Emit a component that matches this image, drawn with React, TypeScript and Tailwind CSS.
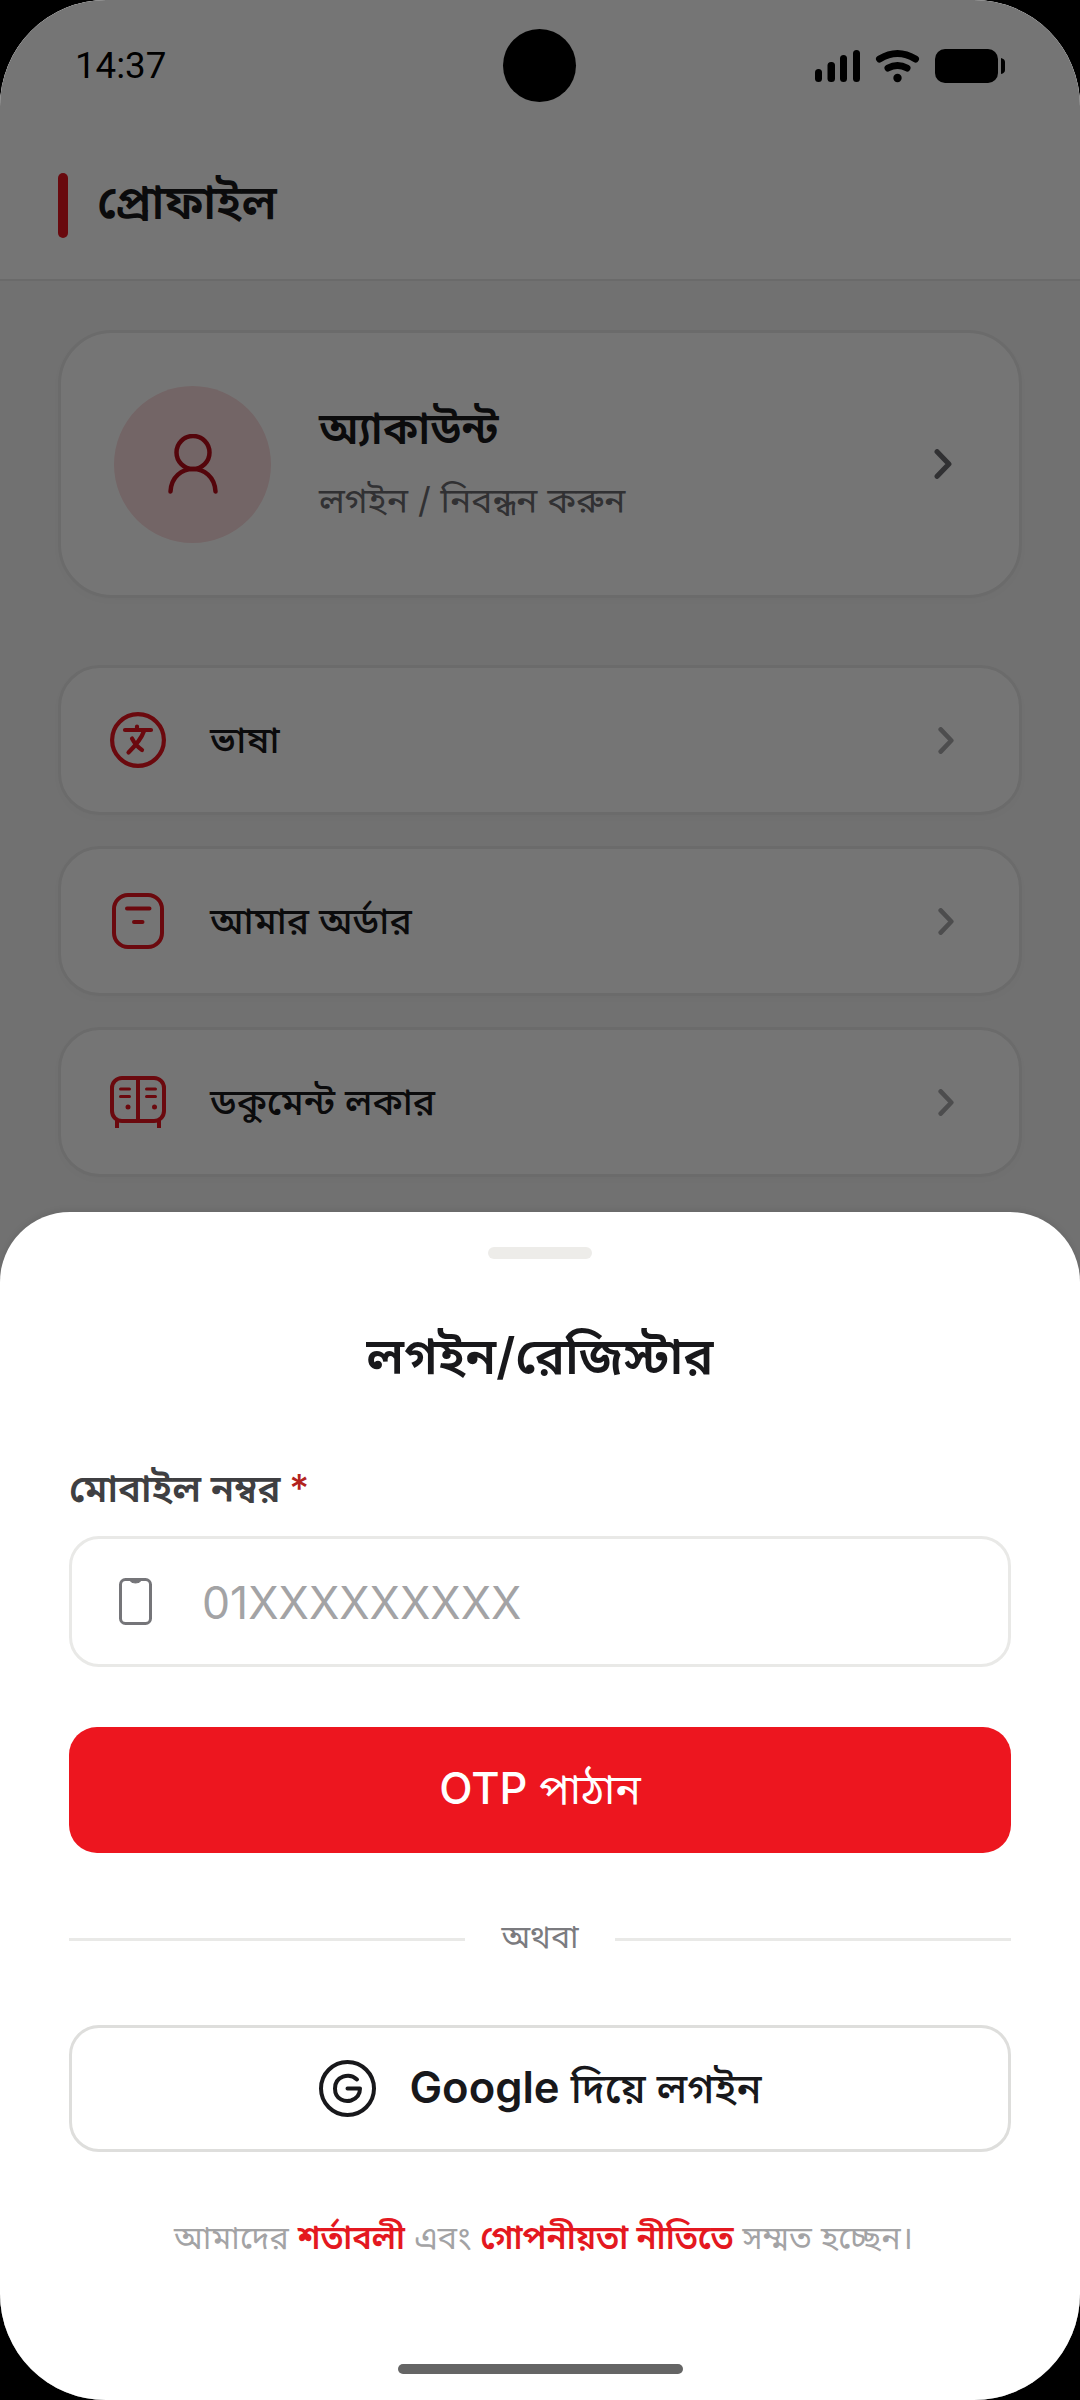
import React from "react";

const bn = "font-['Inter','Noto_Sans_Bengali','Noto_Sans',sans-serif]";

function Chevron({ className, strokeWidth }: { className: string; strokeWidth: number }) {
  return (
    <svg viewBox="0 0 16 28" className={className} fill="none" stroke="currentColor" strokeWidth={strokeWidth} strokeLinecap="round" strokeLinejoin="round">
      <path d="M2.5 2.5 13.5 14 2.5 25.5" />
    </svg>
  );
}

function StatusBar() {
  return (
    <div className="flex h-[100px] items-start justify-between pl-[75px] pr-[75px] pt-[49px]">
      <span className="font-['Roboto',sans-serif] text-[36.7px] leading-[33px] text-black">14:37</span>
      <svg viewBox="815 49 190 34" className="h-[34px] w-[190px]">
        <rect x="815" y="69" width="7" height="13" rx="3.5" />
        <rect x="827.5" y="62" width="7.500" height="20" rx="3.5" />
        <rect x="840" y="55" width="7" height="27" rx="3.5" />
        <rect x="853" y="50" width="7" height="32" rx="3.5" />
        <path d="M879.500 59Q897.5 48 915.500 59" fill="none" stroke="#000" strokeWidth="7" strokeLinecap="round" />
        <path d="M888 68Q897.500 63 907 68" fill="none" stroke="#000" strokeWidth="7" strokeLinecap="round" />
        <circle cx="897.500" cy="78" r="4.200" />
        <rect x="935" y="49" width="63" height="34" rx="10" />
        <path d="M1001 58q4 1 4 4v8q0 3-4 4z" />
      </svg>
    </div>
  );
}

function LanguageIcon() {
  return (
    <svg viewBox="0 0 56 56" className="size-14" fill="none" stroke="currentColor" strokeWidth="4.200" strokeLinecap="round">
      <circle cx="28" cy="28" r="25.900" />
      <path d="M15 18H41M27 14.500v1M34 19Q31 28 18.500 40.500M22 26.500Q26 34 32 38" />
    </svg>
  );
}

function OrderIcon() {
  return (
    <svg viewBox="0 0 56 56" className="size-14" fill="none" stroke="currentColor" strokeWidth="4" strokeLinecap="round">
      <rect x="4" y="2" width="48" height="52" rx="14" />
      <path d="M17 15.500H39.500M24 29H32.500" />
    </svg>
  );
}

function LockerIcon() {
  return (
    <svg viewBox="0 0 56 56" className="size-14" fill="none" stroke="currentColor" strokeWidth="4">
      <rect x="2" y="4" width="52" height="43" rx="10" />
      <path d="M28 4V47M7 46v8M49 46v8" />
      <path d="M10.500 15H19.500M10.500 22.500H19.500M36.500 15H45.500M36.500 22.500H45.500" strokeWidth="3" strokeLinecap="round" />
      <circle cx="18" cy="33" r="2.500" fill="currentColor" stroke="none" />
      <circle cx="44.500" cy="33" r="2.500" fill="currentColor" stroke="none" />
    </svg>
  );
}

const menu = [
  { label: "ভাষা", Icon: LanguageIcon },
  { label: "আমার অর্ডার", Icon: OrderIcon },
  { label: "ডকুমেন্ট লকার", Icon: LockerIcon },
];

function ProfilePage() {
  return (
    <div className="h-full bg-[#f7f7f7]">
      <header className="h-[281px] border-b-2 border-[#e6e6e6] bg-white">
        <StatusBar />
        <div className="mt-[73px] flex h-[65px] items-center gap-[29px] pl-[58px]">
          <span className="h-[65px] w-[10px] rounded-full bg-[#e41520]" />
          <h1 className="-mt-[6px] text-[46.800px] leading-[65px] font-semibold text-[#18181b]">প্রোফাইল</h1>
        </div>
      </header>
      <main className="px-[58px] pt-[49px]">
        <section className="flex h-[268px] items-center rounded-[54px] border-[3px] border-[#e9e9e9] bg-white pr-[67px] pl-[53px] shadow-[0_3px_10px_rgba(0,0,0,0.03)]">
          <div className="flex size-[157px] shrink-0 items-center justify-center rounded-full bg-[#fbdcde] text-[#b80d1a]">
            <svg viewBox="0 0 50 60" className="h-[60px] w-[50px]" fill="none" stroke="currentColor" strokeWidth="4.500" strokeLinecap="round">
              <circle cx="25" cy="18.500" r="16.500" />
              <path d="M2.500 57.500C4 27.500 46 27.500 47.500 57.500" />
            </svg>
          </div>
          <div className="-mt-[3px] ml-[48px] flex-1">
            <h2 className="text-[43.600px] leading-[60px] font-semibold text-[#18181b]">অ্যাকাউন্ট</h2>
            <p className="mt-[17px] text-[35.400px] leading-[50px] text-[#6b6b70]">লগইন / নিবন্ধন করুন</p>
          </div>
          <Chevron className="h-[30px] w-[18px] text-[#6b6b70]" strokeWidth={4.800} />
        </section>
        <div className="mt-[67px] flex flex-col gap-[31px]">
          {menu.map(({ label, Icon }) => (
            <section key={label} className="flex h-[150px] items-center rounded-[42px] border-[3px] border-[#e9e9e9] bg-white pr-[65px] pl-[49px] shadow-[0_3px_10px_rgba(0,0,0,0.03)]">
              <span className="text-[#e9151f]"><Icon /></span>
              <span className="ml-[44px] flex-1 text-[37.300px] leading-[60px] font-medium text-[#18181b]">{label}</span>
              <Chevron className="h-[27px] w-[16px] text-[#a8a8aa]" strokeWidth={4.800} />
            </section>
          ))}
        </div>
      </main>
    </div>
  );
}

function LoginSheet() {
  return (
    <div className="absolute inset-x-0 top-[1212px] bottom-0 flex flex-col items-center rounded-t-[70px] bg-white px-[69px] shadow-[0_-2px_6px_rgba(0,0,0,0.08)]">
      <div className="mt-[35px] h-[12px] w-[104px] shrink-0 rounded-[6px] bg-[#edece9]" />
      <h2 className="mt-[62px] h-[70px] text-[50.300px] leading-[70px] font-semibold whitespace-nowrap text-[#18181b]">লগইন/রেজিস্টার</h2>
      <label className="mt-[72px] h-[50px] self-stretch text-[38.300px] leading-[50px] font-semibold text-[#3f3f42]">
        মোবাইল নম্বর <span className="-ml-[1px] font-medium text-[#b3231d]">*</span>
      </label>
      <div className="mt-[23px] flex h-[131px] w-full shrink-0 items-center rounded-[30px] border-[3px] border-[#e9e9e7] pl-[47px]">
        <svg viewBox="0 0 33 47" className="h-[47px] w-[33px] text-[#757579]" fill="none" stroke="currentColor" strokeWidth="3">
          <rect x="1.500" y="1.500" width="30" height="44" rx="5" />
          <path d="M11 2.500H22Q21 5 16.500 5T11 2.500Z" fill="currentColor" strokeWidth="1" />
        </svg>
        <span className="mt-[2px] ml-[50px] font-['Inter',sans-serif] text-[44.500px] leading-[60px] text-[#a3a3a5]">01XXXXXXXXX</span>
      </div>
      <button className="mt-[60px] h-[126px] w-full shrink-0 rounded-[28px] bg-[#ed161f] pb-[2px] text-[42.400px] font-normal text-white">
        <span className="font-['Inter',sans-serif] text-[43.400px] font-medium">OTP</span> পাঠান
      </button>
      <div className="mt-[61px] flex h-[50px] w-full items-center gap-[36px]">
        <span className="h-[3px] flex-1 bg-[#e9e9e7]" />
        <span className="-mt-[4px] text-[32.200px] leading-[50px] text-[#7b7b7f]">অথবা</span>
        <span className="h-[3px] flex-1 bg-[#e9e9e7]" />
      </div>
      <button className="mt-[61px] flex h-[127px] w-full shrink-0 items-center justify-center gap-[33px] rounded-[30px] border-[3px] border-[#dededc] pl-[1px] text-[#18181b]">
        <svg viewBox="0 0 57 57" className="size-[57px]" fill="none" stroke="currentColor" strokeWidth="4" strokeLinecap="round" strokeLinejoin="round">
          <circle cx="28.500" cy="28.500" r="26.500" />
          <path d="M38 19.500C30 12 16 16.500 16 28.500S27 42 32 40.500Q41 37.500 41 28.500H28.500" />
        </svg>
        <span className="-mt-[2px] text-[41.200px] leading-[60px] font-medium"><span className="text-[43.600px] font-semibold">Google</span> দিয়ে লগইন</span>
      </button>
      <p className="mt-[60px] ml-[7px] h-[50px] text-[32.300px] leading-[50px] whitespace-nowrap text-[#a3a3a5]">
        আমাদের <b className="text-[32.500px] font-semibold text-[#e41820]">শর্তাবলী</b> এবং <b className="text-[32.800px] font-semibold text-[#e41820]">গোপনীয়তা নীতিতে</b> সম্মত হচ্ছেন।
      </p>
      <div className="mt-auto mb-[26px] h-[10px] w-[285px] rounded-full bg-[#656565]" />
    </div>
  );
}

export default function App() {
  return (
    <div className="h-[2400px] w-[1080px] bg-black">
      <div className={`relative h-full w-full overflow-hidden rounded-[106px] ${bn}`}>
        <ProfilePage />
        <div className="absolute inset-0 bg-black/54" />
        <div className="absolute top-[29px] left-[503px] size-[73px] rounded-full bg-black" />
        <LoginSheet />
      </div>
    </div>
  );
}
